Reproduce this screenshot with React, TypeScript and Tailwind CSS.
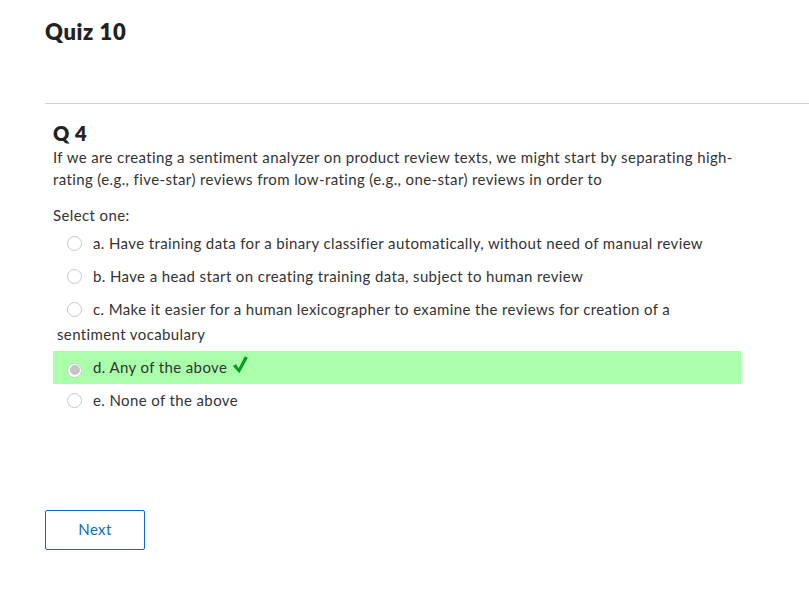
import React from 'react'

const options = [
  { key: 'a', text: 'Have training data for a binary classifier automatically, without need of manual review' },
  { key: 'b', text: 'Have a head start on creating training data, subject to human review' },
  { key: 'c', text: 'Make it easier for a human lexicographer to examine the reviews for creation of a sentiment vocabulary' },
  { key: 'd', text: 'Any of the above', correct: true },
  { key: 'e', text: 'None of the above' },
]

function Radio({ checked }: { checked?: boolean }) {
  return (
    <span className="relative top-[2px] ml-[10px] mr-[11px] inline-flex h-[15px] w-[15px] items-center justify-center rounded-full border border-[#c8c8c8] bg-white align-baseline">
      {checked && <span className="h-[10px] w-[10px] rounded-full bg-[#c4c4c4]" />}
    </span>
  )
}

export default function App() {
  return (
    <main className="min-h-screen bg-white pl-[45px] font-['Lato','Liberation_Sans',sans-serif] text-[#333333]">
      <h1 className="pt-[17px] text-[22px] leading-[30px] font-extrabold tracking-[0.6px] text-[#222]">Quiz 10</h1>

      <hr className="mt-[56px] border-t border-[#cfcfcf]" />

      <section className="w-[696px] px-2 pt-[16px]">
        <h2 className="text-[20px] leading-[26px] font-extrabold tracking-[0.5px] text-[#222]">Q 4</h2>
        <p className="text-[15px] leading-[22px] tracking-[0.38px]">
          If we are creating a sentiment analyzer on product review texts, we might start by separating high-rating (e.g., five-star) reviews from low-rating (e.g., one-star) reviews in order to
        </p>

        <p className="mt-[14px] text-[15px] leading-[22px] tracking-[0.38px]">Select one:</p>

        <div className="mt-[1px] w-[688px] text-[15px] tracking-[0.38px]">
          {options.map((o) => (
            <div
              key={o.key}
              className={`py-1 pl-1 leading-[25px] ${o.correct ? 'bg-[#aaffaa]' : ''}`}
            >
              <Radio checked={o.correct} />
              <span>
                {o.key}. {o.text}
              </span>
              {o.correct && (
                <svg className="ml-[5px] inline-block h-[18px] w-[16px] align-[-1px]" viewBox="0 0 16 18">
                  <path d="M0.8 10 L4.2 8.3 L6.6 12.2 L12.8 0.3 L15.8 1.8 L7.4 17.2 Z" fill="#0a9a2a" />
                </svg>
              )}
            </div>
          ))}
        </div>
      </section>

      <button className="mt-[93px] h-[40px] w-[100px] rounded-[2px] border border-[#0f6cbf] pb-[2px] text-[15px] tracking-[0.38px] text-[#0f6cbf]">
        Next
      </button>
    </main>
  )
}
